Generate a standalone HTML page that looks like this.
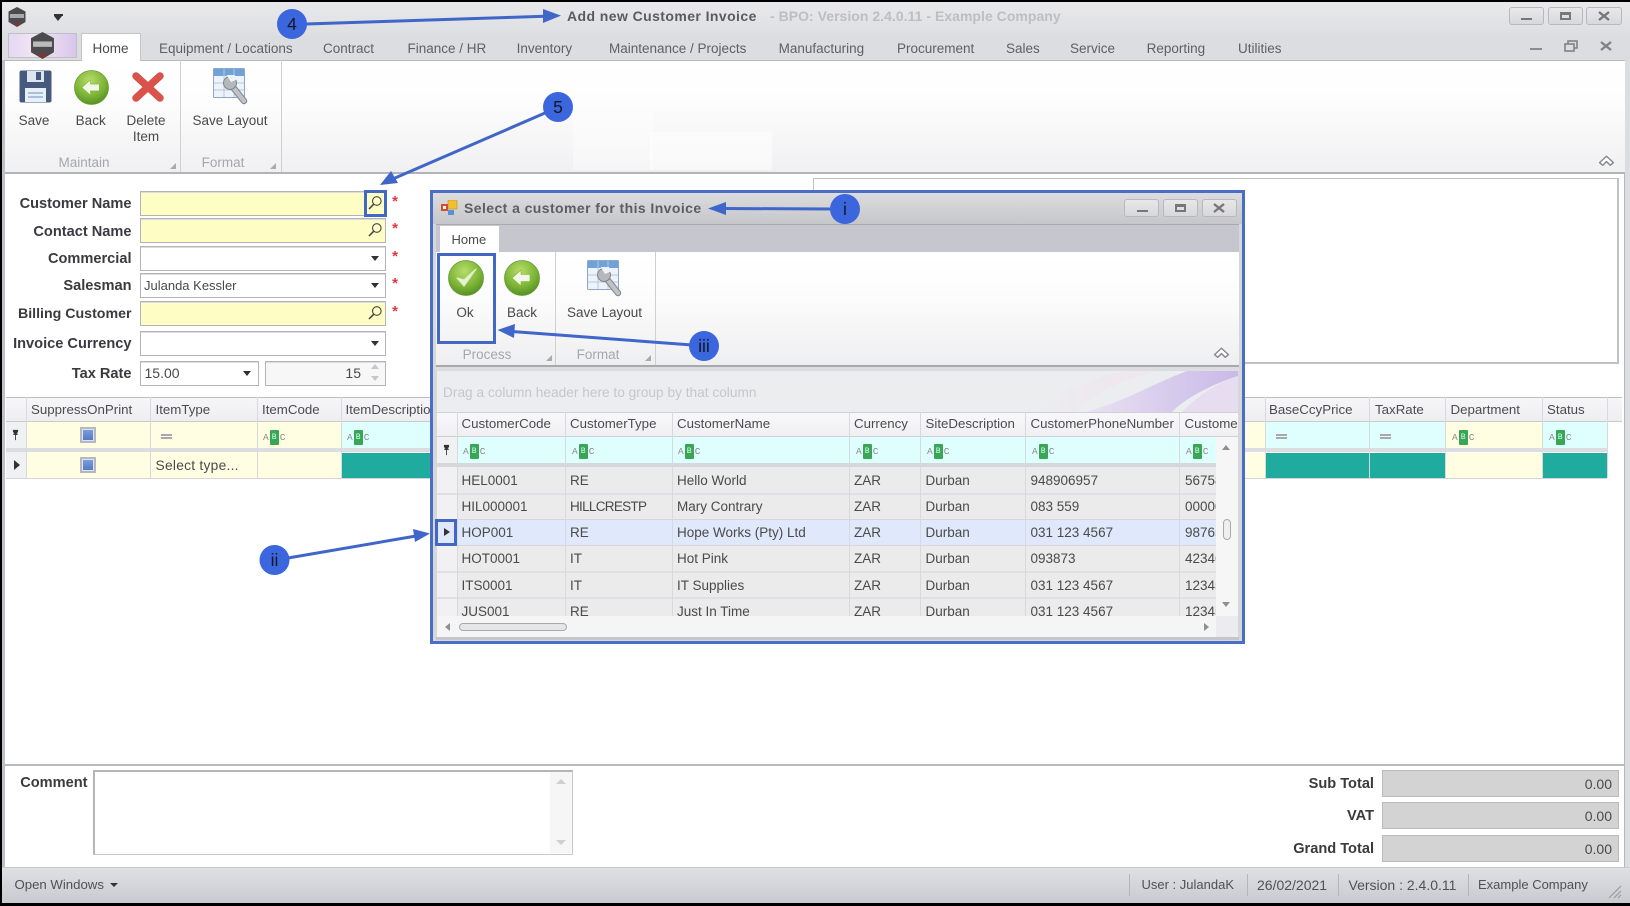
<!DOCTYPE html>
<html><head><meta charset="utf-8"><style>
html,body{margin:0;padding:0;background:#000;width:1630px;height:906px;overflow:hidden}
#p{position:relative;width:1630px;height:906px;overflow:hidden;background:#fff;font-family:"Liberation Sans",sans-serif;font-size:13.5px;color:#4a4a4a;filter:blur(.35px)}
#p div,#p span.a,#p svg{position:absolute}
.t{position:absolute;line-height:0;white-space:nowrap}
.c{transform:translateX(-50%)}
.r{transform:translateX(-100%)}
.b{font-weight:bold;font-size:14.6px;color:#3a3a3f}
.tab{color:#5f6066;font-size:13.5px}
.cap{color:#a6a7ab;font-size:13.5px}
.gh{color:#4c4c50;font-size:13.3px}
.abc{position:absolute;font:9.5px "Liberation Mono",monospace;color:#888;line-height:13px;height:13px;white-space:nowrap;margin-top:-5px}
.abc b{display:inline-block;width:9px;height:15px;line-height:15px;margin:-1px 1px;background:#3aa655;color:#cfe;font-weight:normal;text-align:center;border-radius:1px;font-size:8px;vertical-align:top}
.f{background:#ffffff;border:1px solid #b4b4b8;box-shadow:inset 0 1px 0 #ddd;box-sizing:border-box}
.y{background:#fdfdc4}
.v{width:1px;background:#d7d9de}
.h{height:1px;background:#d3d5d9}
.ast{color:#e0353b;font-weight:bold;font-size:15px}
.tri{width:0;height:0;border-left:5px solid transparent;border-right:5px solid transparent;border-top:5px solid #333}
.wb{box-sizing:border-box;border:1px solid #b8b9bd;border-radius:3px;background:linear-gradient(#e8e8ea,#d8d8db)}
.chk{width:16px;height:16px;box-sizing:border-box;border:2px solid #b5b8c4;background:linear-gradient(#7da0df,#5277c4);box-shadow:inset 0 0 0 1px #dfe3ee}
.hl{box-sizing:border-box;border:3px solid #4268c4}
.teal{background:#20ab9f}
</style></head><body><div id="p">

<svg width="0" height="0" style="position:absolute">
<defs>
<radialGradient id="gg" cx="45%" cy="30%" r="75%"><stop offset="0" stop-color="#b9dc6a"/><stop offset=".6" stop-color="#7cb536"/><stop offset="1" stop-color="#4f8a22"/></radialGradient>
<symbol id="back" viewBox="0 0 36 36"><circle cx="18" cy="18" r="17.5" fill="url(#gg)" stroke="#6a9a35" stroke-width=".8"/><path d="M8 18 L17 10 V14.5 H26 V21.5 H17 V26 Z" fill="#f2f8e6" stroke="#7cb536" stroke-width=".6"/></symbol>
<symbol id="ok" viewBox="0 0 36 36"><circle cx="18" cy="18" r="17.5" fill="url(#gg)" stroke="#6a9a35" stroke-width=".8"/><path d="M9 18 L16 26 L28 9 L16 20 Z" fill="#e9f2d8" stroke="#dfeec8" stroke-width="1.2" stroke-linejoin="round"/></symbol>
<symbol id="lay" viewBox="0 0 36 38"><rect x=".5" y=".5" width="31" height="29" rx="1" fill="#edf3fa" stroke="#8fa6c4"/><rect x="1" y="1" width="30" height="7" fill="#6ea2d8"/><path d="M1 15H31M1 22H31M11 1V29M21 1V29" stroke="#b7c8dc" fill="none"/><path d="M19 18 L31 33" stroke="#85898f" stroke-width="6.5" stroke-linecap="round"/><path d="M19 18 L31 33" stroke="#bfc2c7" stroke-width="4.3" stroke-linecap="round"/><circle cx="17" cy="15" r="6.5" fill="#b4b7bc" stroke="#7a7e84" stroke-width=".9"/><path d="M13.5 7 L18 14 L23 12 L22 7 Z" fill="#edf3fa"/></symbol>
<symbol id="srch" viewBox="0 0 16 16"><circle cx="9.8" cy="6" r="4.3" fill="none" stroke="#444" stroke-width="1.1"/><path d="M6.6 9.3 L2 14" stroke="#444" stroke-width="1.6"/></symbol>
<symbol id="pin" viewBox="0 0 10 14"><path d="M2 1H8V3.2L6.4 5.6H7.6V6.8H5.5V13H4.5V6.8H2.4V5.6H3.6L2 3.2Z" fill="#333"/></symbol>
<symbol id="chev" viewBox="0 0 16 12"><path d="M1.5 8 L8 2 L14.5 8 L11.5 10.5 L8 7 L4.5 10.5 Z" fill="#fff" stroke="#8a8b90" stroke-width="1.4" stroke-linejoin="round"/></symbol>
</defs></svg>

<!-- frame -->
<div style="left:0;top:0;width:1630px;height:2px;background:#000"></div>
<div style="left:0;top:0;width:2px;height:906px;background:#000"></div>
<div style="left:2px;top:2px;width:1628px;height:34px;background:linear-gradient(#e9e9eb,#dddee1)"></div>
<div style="left:2px;top:36px;width:1628px;height:24px;background:#dcdde0"></div>
<div style="left:2px;top:60px;width:3px;height:810px;background:#bfc0c5"></div>
<div style="left:1625px;top:60px;width:5px;height:810px;background:#dcdde0"></div>
<div style="left:1624px;top:60px;width:1px;height:810px;background:#b5b6ba"></div>

<!-- top-left -->
<svg style="left:8px;top:7px" width="18" height="20" viewBox="0 0 18 20"><path d="M9 0 L17.5 4.5 V15 L9 20 L.5 15 V4.5 Z" fill="#4c4a4c"/><rect x="2" y="7" width="14" height="4" fill="#aaa"/><path d="M6 16 L9 20 L12 16 Z" fill="#8c3030"/></svg>
<div style="left:54px;top:14px;width:9px;height:1.5px;background:#333"></div>
<div class="tri" style="left:54px;top:16px;border-width:5px 4.5px 0;border-top-color:#333"></div>

<!-- title -->
<span class="t" style="left:567px;top:16px;font-weight:bold;font-size:14px;color:#5a5b60;letter-spacing:.42px">Add new Customer Invoice</span>
<span class="t" style="left:770px;top:16px;font-weight:bold;font-size:14px;color:#bdbec2;letter-spacing:.03px">- BPO: Version 2.4.0.11 - Example Company</span>

<!-- window buttons -->
<div class="wb" style="left:1509px;top:7px;width:35px;height:18px"></div><div style="left:1521px;top:18px;width:11px;height:2px;background:#777"></div>
<div class="wb" style="left:1548px;top:7px;width:35px;height:18px"></div><div style="left:1560px;top:12px;width:11px;height:8px;box-sizing:border-box;border:2px solid #777;border-top-width:3px"></div>
<div class="wb" style="left:1586px;top:7px;width:36px;height:18px"></div><svg style="left:1598px;top:11px" width="12" height="10"><path d="M1 1L11 9M11 1L1 9" stroke="#777" stroke-width="2.4"/></svg>
<div style="left:1530px;top:48px;width:12px;height:2px;background:#8a8b90"></div>
<svg style="left:1564px;top:40px" width="14" height="12"><rect x="4" y="1" width="9" height="7" fill="none" stroke="#808186" stroke-width="1.6"/><rect x="1" y="4" width="9" height="7" fill="#dcdde0" stroke="#808186" stroke-width="1.6"/></svg>
<svg style="left:1600px;top:41px" width="12" height="10"><path d="M1 1L11 9M11 1L1 9" stroke="#808186" stroke-width="2.4"/></svg>

<!-- app button + tabs -->
<div style="left:8px;top:33px;width:69px;height:25px;border:1px solid #c0c0c6;box-sizing:border-box;background:linear-gradient(90deg,#e4d8f4,#f2e6f4 40%,#d8c6ec)"></div>
<svg style="left:30px;top:32px" width="25" height="27" viewBox="0 0 18 20"><path d="M9 0 L17.5 4.5 V15 L9 20 L.5 15 V4.5 Z" fill="#4c4a4c"/><rect x="2" y="7" width="14" height="4" fill="#bbb"/><path d="M6 16 L9 20 L12 16 Z" fill="#8c3030"/></svg>
<div style="left:81px;top:33px;width:60px;height:28px;box-sizing:border-box;background:#fff;border:1px solid #c4c5c9;border-bottom:0;z-index:2"></div>
<span class="t tab" style="left:92.5px;top:48.5px;color:#4a4a4f;z-index:3">Home</span>
<span class="t tab" style="left:159px;top:48.5px">Equipment / Locations</span>
<span class="t tab" style="left:323px;top:48.5px">Contract</span>
<span class="t tab" style="left:407.5px;top:48.5px">Finance / HR</span>
<span class="t tab" style="left:516.6px;top:48.5px">Inventory</span>
<span class="t tab" style="left:609px;top:48.5px">Maintenance / Projects</span>
<span class="t tab" style="left:778.6px;top:48.5px">Manufacturing</span>
<span class="t tab" style="left:897px;top:48.5px">Procurement</span>
<span class="t tab" style="left:1006px;top:48.5px">Sales</span>
<span class="t tab" style="left:1070px;top:48.5px">Service</span>
<span class="t tab" style="left:1146.6px;top:48.5px">Reporting</span>
<span class="t tab" style="left:1238px;top:48.5px">Utilities</span>

<!-- ribbon -->
<div style="left:5px;top:60px;width:1620px;height:113px;background:linear-gradient(#fff 0,#fdfdfd 35%,#f0f0f2 100%);border-top:1px solid #b9babe;box-sizing:border-box"></div>
<div style="left:573px;top:112px;width:80px;height:58px;background:#fff;opacity:.4"></div>
<div style="left:650px;top:132px;width:122px;height:38px;background:#fff;opacity:.5"></div>
<div style="left:5px;top:172px;width:1620px;height:2px;background:#b3b4b8"></div>
<div style="left:180px;top:60px;width:1px;height:112px;background:#cfd0d3"></div>
<div style="left:281px;top:60px;width:1px;height:112px;background:#cfd0d3"></div>

<svg style="left:19px;top:70px" width="33" height="33" viewBox="0 0 33 33"><rect x=".5" y=".5" width="32" height="32" rx="2" fill="#465a80"/><rect x="8" y="1" width="17" height="11" fill="#dfe5ee"/><rect x="17" y="2" width="5" height="8" fill="#465a80"/><rect x="6" y="18" width="21" height="14" fill="#e8eff8"/><path d="M9 23H24M9 27H24" stroke="#8fb0d8" stroke-width="1.5"/></svg>
<svg style="left:74px;top:70px" width="35" height="35"><use href="#back"/></svg>
<svg style="left:132px;top:72px" width="32" height="30" viewBox="0 0 32 30"><path d="M4 4 L28 26 M28 4 L4 26" stroke="#d9534a" stroke-width="7.5" stroke-linecap="round"/></svg>
<svg style="left:213px;top:68px" width="36" height="38"><use href="#lay"/></svg>
<span class="t c" style="left:34px;top:121px">Save</span>
<span class="t c" style="left:90.7px;top:121px">Back</span>
<span class="t c" style="left:146px;top:121px">Delete</span>
<span class="t c" style="left:146px;top:137px">Item</span>
<span class="t c" style="left:230px;top:121px">Save Layout</span>
<span class="t c cap" style="left:84px;top:163px">Maintain</span>
<span class="t c cap" style="left:223px;top:163px">Format</span>
<div style="left:170px;top:163px;border-left:6px solid transparent;border-bottom:6px solid #aaa"></div>
<div style="left:270px;top:163px;border-left:6px solid transparent;border-bottom:6px solid #aaa"></div>
<svg style="left:1598px;top:154px" width="17" height="13"><use href="#chev"/></svg>

<!-- background panel -->
<div style="left:813px;top:178px;width:806px;height:186px;box-sizing:border-box;border:1px solid #c0c1c5;border-right-width:2px;border-bottom-width:2px"></div>

<!-- form -->
<span class="t r b" style="left:131.5px;top:204px">Customer Name</span>
<span class="t r b" style="left:131.5px;top:231.5px">Contact Name</span>
<span class="t r b" style="left:131.5px;top:259px">Commercial</span>
<span class="t r b" style="left:131.5px;top:286px">Salesman</span>
<span class="t r b" style="left:131.5px;top:314px;font-size:14.2px">Billing Customer</span>
<span class="t r b" style="left:131.5px;top:344px">Invoice Currency</span>
<span class="t r b" style="left:131.5px;top:374px">Tax Rate</span>

<div class="f y" style="left:139.5px;top:191px;width:246px;height:24.5px"></div>
<div class="f y" style="left:139.5px;top:218px;width:246px;height:25px"></div>
<div class="f" style="left:139.5px;top:246px;width:246px;height:24.5px"></div>
<div class="f" style="left:139.5px;top:273px;width:246px;height:25px"></div>
<div class="f y" style="left:139.5px;top:301px;width:246px;height:24.5px"></div>
<div class="f" style="left:139.5px;top:330.5px;width:246px;height:25px"></div>
<div class="f" style="left:139.5px;top:360.5px;width:119px;height:25px"></div>
<div class="f" style="left:264.5px;top:360.5px;width:121px;height:25px;background:#f7f7f8"></div>
<span class="t" style="left:144px;top:285.5px;font-size:13px">Julanda Kessler</span>
<span class="t" style="left:144.5px;top:373px;font-size:14px">15.00</span>
<span class="t r" style="left:361px;top:373px;font-size:14px">15</span>
<div style="left:371px;top:364px;border:4px solid transparent;border-top:0;border-bottom:5px solid #c6c7ca"></div>
<div style="left:371px;top:376px;border:4px solid transparent;border-bottom:0;border-top:5px solid #c6c7ca"></div>
<svg style="left:367px;top:195px" width="16" height="16"><use href="#srch"/></svg>
<svg style="left:367px;top:222px" width="16" height="16"><use href="#srch"/></svg>
<svg style="left:367px;top:305px" width="16" height="16"><use href="#srch"/></svg>
<div class="hl" style="left:364px;top:190px;width:23px;height:26.5px"></div>
<div class="tri" style="left:371px;top:256px;border-width:5px 4.5px 0"></div>
<div class="tri" style="left:371px;top:283px;border-width:5px 4.5px 0"></div>
<div class="tri" style="left:371px;top:341px;border-width:5px 4.5px 0"></div>
<div class="tri" style="left:243px;top:371px;border-width:5px 4.5px 0"></div>
<span class="t c ast" style="left:395px;top:202px">*</span>
<span class="t c ast" style="left:395px;top:229px">*</span>
<span class="t c ast" style="left:395px;top:257px">*</span>
<span class="t c ast" style="left:395px;top:284px">*</span>
<span class="t c ast" style="left:395px;top:312px">*</span>

<!-- main grid -->
<div style="left:6px;top:397px;width:1616px;height:25px;background:linear-gradient(#f6f6f8,#eeeef0);border-top:1px solid #bcbdc1;border-bottom:1px solid #c9cacd;box-sizing:border-box"></div>
<div style="left:26px;top:422px;width:315px;height:26px;background:#fffde2"></div>
<div style="left:341px;top:422px;width:924px;height:26px;background:#dfffff"></div>
<div style="left:6px;top:422px;width:20px;height:26px;background:#f0f1f3"></div>
<div style="left:1265px;top:422px;width:180px;height:26px;background:#dfffff"></div>
<div style="left:1445px;top:422px;width:97px;height:26px;background:#fffde2"></div>
<div style="left:1542px;top:422px;width:65px;height:26px;background:#dfffff"></div>
<div style="left:1245px;top:422px;width:20px;height:26px;background:#fffde2"></div>
<div style="left:6px;top:448px;width:1601px;height:4px;background:#dcdde0"></div>
<div style="left:26px;top:452px;width:315px;height:26px;background:#fffde2"></div>
<div style="left:6px;top:452px;width:20px;height:26px;background:#f0f1f3"></div>
<div class="teal" style="left:341px;top:453px;width:90px;height:25px"></div>
<div style="left:1245px;top:453px;width:20px;height:25px;background:#fffde2"></div>
<div class="teal" style="left:1265px;top:453px;width:104px;height:25px"></div>
<div class="teal" style="left:1370px;top:453px;width:75px;height:25px"></div>
<div style="left:1446px;top:453px;width:96px;height:25px;background:#fffde2"></div>
<div class="teal" style="left:1543px;top:453px;width:64px;height:25px"></div>
<div class="h" style="left:6px;top:478px;width:1601px"></div>
<div class="v" style="left:26px;top:397px;height:81px"></div>
<div class="v" style="left:150px;top:397px;height:81px"></div>
<div class="v" style="left:257px;top:397px;height:81px"></div>
<div class="v" style="left:341px;top:397px;height:81px"></div>
<div class="v" style="left:1265px;top:397px;height:81px"></div>
<div class="v" style="left:1369px;top:397px;height:81px"></div>
<div class="v" style="left:1445px;top:397px;height:81px"></div>
<div class="v" style="left:1542px;top:397px;height:81px"></div>
<div class="v" style="left:1607px;top:397px;height:81px"></div>
<span class="t gh" style="left:31px;top:409.5px">SuppressOnPrint</span>
<span class="t gh" style="left:155.5px;top:409.5px">ItemType</span>
<span class="t gh" style="left:262px;top:409.5px">ItemCode</span>
<span class="t gh" style="left:345.5px;top:409.5px">ItemDescription</span>
<span class="t gh" style="left:1269px;top:409.5px">BaseCcyPrice</span>
<span class="t gh" style="left:1375px;top:409.5px">TaxRate</span>
<span class="t gh" style="left:1450.5px;top:409.5px">Department</span>
<span class="t gh" style="left:1547px;top:409.5px">Status</span>
<svg style="left:11px;top:429px" width="9" height="12"><use href="#pin"/></svg>
<div class="chk" style="left:80px;top:427px"></div>
<div class="chk" style="left:80px;top:457px"></div>
<div style="left:161px;top:434px;width:11px;height:1.5px;background:#a9a9ad;box-shadow:0 3px 0 #a9a9ad"></div>
<div style="left:1276px;top:434px;width:11px;height:1.5px;background:#a9a9ad;box-shadow:0 3px 0 #a9a9ad"></div>
<div style="left:1380px;top:434px;width:11px;height:1.5px;background:#a9a9ad;box-shadow:0 3px 0 #a9a9ad"></div>
<span class="abc" style="left:263px;top:436px">A<b>B</b>C</span>
<span class="abc" style="left:347px;top:436px">A<b>B</b>C</span>
<span class="abc" style="left:1452px;top:436px">A<b>B</b>C</span>
<span class="abc" style="left:1549px;top:436px">A<b>B</b>C</span>
<div style="left:14px;top:460px;border:5px solid transparent;border-left:6px solid #333;border-right:0"></div>
<span class="t" style="left:155.5px;top:465.5px;font-size:13.8px;letter-spacing:.25px">Select type...</span>

<div style="left:5px;top:764px;width:1620px;height:2px;background:#b9babd"></div>

<!-- bottom -->
<span class="t r b" style="left:87.5px;top:783px">Comment</span>
<div style="left:93px;top:770px;width:480px;height:84.5px;box-sizing:border-box;border:1px solid #c9c9cc;border-top:2px solid #b5b5b8;border-left:2px solid #b5b5b8"></div>
<div style="left:550px;top:772px;width:22px;height:81px;background:#f6f6f7"></div>
<div style="left:556px;top:779px;border:5px solid transparent;border-top:0;border-bottom:5px solid #d0d0d3"></div>
<div style="left:556px;top:840px;border:5px solid transparent;border-bottom:0;border-top:5px solid #d0d0d3"></div>

<span class="t r b" style="left:1374px;top:784px">Sub Total</span>
<span class="t r b" style="left:1374px;top:816px">VAT</span>
<span class="t r b" style="left:1374px;top:849px">Grand Total</span>
<div style="left:1381.5px;top:770px;width:237px;height:27px;background:#d3d3d3;border:1px solid #bbb;box-sizing:border-box"></div>
<div style="left:1381.5px;top:802px;width:237px;height:27px;background:#d3d3d3;border:1px solid #bbb;box-sizing:border-box"></div>
<div style="left:1381.5px;top:835px;width:237px;height:27px;background:#d3d3d3;border:1px solid #bbb;box-sizing:border-box"></div>
<span class="t r" style="left:1612px;top:783.5px;font-size:14px">0.00</span>
<span class="t r" style="left:1612px;top:815.5px;font-size:14px">0.00</span>
<span class="t r" style="left:1612px;top:848.5px;font-size:14px">0.00</span>

<!-- status bar -->
<div style="left:2px;top:867px;width:1628px;height:36px;background:linear-gradient(#dfe0e4,#c9cad0);border-top:1px solid #c8c9cc;box-sizing:border-box"></div>
<div style="left:0;top:903px;width:1630px;height:3px;background:#000"></div>
<span class="t" style="left:14.5px;top:885px;font-size:13.2px;color:#505055">Open Windows</span>
<div class="tri" style="left:109.5px;top:883px;border-width:4px 4px 0"></div>
<div class="v" style="left:1129px;top:874px;height:22px;background:#b5b6bb"></div>
<div class="v" style="left:1247px;top:874px;height:22px;background:#b5b6bb"></div>
<div class="v" style="left:1338px;top:874px;height:22px;background:#b5b6bb"></div>
<div class="v" style="left:1468px;top:874px;height:22px;background:#b5b6bb"></div>
<span class="t" style="left:1141.5px;top:885px;font-size:13px;color:#505055">User : JulandaK</span>
<span class="t" style="left:1257px;top:885px;font-size:14px;color:#505055">26/02/2021</span>
<span class="t" style="left:1348.5px;top:885px;font-size:14px;color:#505055">Version : 2.4.0.11</span>
<span class="t" style="left:1478px;top:885px;font-size:13px;color:#505055">Example Company</span>
<svg style="left:1608px;top:885px" width="14" height="14"><path d="M1 13L13 1M6 13L13 6M10 13L13 10" stroke="#9a9ba0" stroke-width="1.2"/></svg>

<!-- DIALOG -->
<div style="left:430px;top:190px;width:815px;height:454px;box-sizing:border-box;border:3px solid #4a6ec6;background:#d6d7db"></div>
<div style="left:433px;top:193px;width:809px;height:31px;background:linear-gradient(#dcdcde,#c6c7ca)"></div>
<div style="left:436px;top:224px;width:803px;height:29px;background:#c6c7ce;border-top:1px solid #a9aaae;box-sizing:border-box"></div>
<svg style="left:441px;top:200px" width="17" height="16"><rect x="7" y="0" width="9" height="9" fill="#f0c030" stroke="#b08a20" stroke-width=".5"/><rect x="0" y="4" width="7" height="7" fill="#d94a30"/><rect x="7" y="10" width="6" height="5" fill="#5a8fdc"/><rect x="2" y="6" width="3" height="3" fill="#fff"/></svg>
<span class="t" style="left:464px;top:208px;font-weight:bold;font-size:14px;color:#5c5d62;letter-spacing:.42px">Select a customer for this Invoice</span>
<div class="wb" style="left:1124px;top:199px;width:35px;height:18px"></div><div style="left:1137px;top:210px;width:11px;height:2px;background:#777"></div>
<div class="wb" style="left:1163px;top:199px;width:35px;height:18px"></div><div style="left:1175px;top:204px;width:11px;height:8px;box-sizing:border-box;border:2px solid #777;border-top-width:3px"></div>
<div class="wb" style="left:1202px;top:199px;width:35px;height:18px"></div><svg style="left:1213px;top:203px" width="12" height="10"><path d="M1 1L11 9M11 1L1 9" stroke="#777" stroke-width="2.4"/></svg>
<div style="left:440px;top:226px;width:59px;height:27px;background:#fff"></div>
<span class="t" style="left:451.5px;top:240px;font-size:13px;color:#4a4a4f">Home</span>

<div style="left:436px;top:252px;width:803px;height:113px;background:linear-gradient(#fff 0,#fdfdfd 35%,#efeff1 100%)"></div>
<div style="left:436px;top:365px;width:803px;height:2px;background:#a8a9ad"></div>
<div style="left:555px;top:252px;width:1px;height:113px;background:#cfd0d3"></div>
<div style="left:655px;top:252px;width:1px;height:113px;background:#cfd0d3"></div>
<svg style="left:448px;top:260px" width="36" height="36"><use href="#ok"/></svg>
<svg style="left:504px;top:260px" width="36" height="36"><use href="#back"/></svg>
<svg style="left:587px;top:260px" width="36" height="38"><use href="#lay"/></svg>
<span class="t c" style="left:465px;top:312.5px">Ok</span>
<span class="t c" style="left:522px;top:312.5px">Back</span>
<span class="t c" style="left:604.5px;top:312.5px">Save Layout</span>
<span class="t c cap" style="left:487px;top:355px">Process</span>
<span class="t c cap" style="left:598px;top:355px">Format</span>
<div style="left:546px;top:355px;border-left:6px solid transparent;border-bottom:6px solid #aaa"></div>
<div style="left:645px;top:355px;border-left:6px solid transparent;border-bottom:6px solid #aaa"></div>
<svg style="left:1213px;top:346px" width="17" height="13"><use href="#chev"/></svg>

<div style="left:436px;top:367px;width:803px;height:4px;background:#dcdde0"></div>
<!-- group panel -->
<div style="left:437px;top:371px;width:801px;height:41px;background:#ecedef;overflow:hidden">
<svg style="left:0;top:0" width="801" height="41" viewBox="0 0 801 41">
<defs><linearGradient id="sw" x1="0" x2="1"><stop offset="0" stop-color="#e9e2f2"/><stop offset="1" stop-color="#c9b9e8"/></linearGradient><linearGradient id="sp" x1="0" x2="1"><stop offset="0" stop-color="#ecedef"/><stop offset="1" stop-color="#f0e4ee"/></linearGradient></defs>
<path d="M600 41 C620 20 660 5 690 0 H720 C680 10 650 25 640 41 Z" fill="url(#sp)"/>
<path d="M648 41 C690 30 710 15 750 0 H801 V5 C770 15 745 30 735 41 Z" fill="url(#sw)"/>
<path d="M745 41 C760 25 780 12 801 5 V41 Z" fill="#e6def0"/>
</svg></div>
<span class="t" style="left:443px;top:392.5px;font-size:13.7px;color:#c6c7cb">Drag a column header here to group by that column</span>

<!-- dialog grid -->
<div style="left:437px;top:412px;width:801px;height:25px;background:linear-gradient(#f8f8fa,#f0f0f3);border-top:1px solid #cfd0d4;border-bottom:1px solid #cfd0d4;box-sizing:border-box"></div>
<div style="left:437px;top:437px;width:20px;height:26px;background:#f0f1f3"></div>
<div style="left:457px;top:437px;width:759px;height:26px;background:#dfffff"></div>
<div style="left:437px;top:463px;width:779px;height:4px;background:#d6d7da"></div>
<div style="left:437px;top:467px;width:20px;height:149px;background:#f1f1f3"></div>
<div style="left:457px;top:467px;width:759px;height:149px;background:#ebebeb"></div>
<div style="left:437px;top:519px;width:779px;height:26px;background:#e0e9fb"></div>
<div class="h" style="left:437px;top:493px;width:779px;height:2px;background:#dfe0e3"></div>
<div class="h" style="left:437px;top:519px;width:779px;background:#d5d7dc"></div>
<div class="h" style="left:437px;top:545px;width:779px;background:#d5d7dc"></div>
<div class="h" style="left:437px;top:571px;width:779px;height:2px;background:#dfe0e3"></div>
<div class="h" style="left:437px;top:597px;width:779px;height:2px;background:#dfe0e3"></div>
<div class="v" style="left:457px;top:412px;height:204px"></div>
<div class="v" style="left:565px;top:412px;height:204px"></div>
<div class="v" style="left:672px;top:412px;height:204px"></div>
<div class="v" style="left:849px;top:412px;height:204px"></div>
<div class="v" style="left:920px;top:412px;height:204px"></div>
<div class="v" style="left:1025px;top:412px;height:204px"></div>
<div class="v" style="left:1179px;top:412px;height:204px"></div>

<span class="t gh" style="left:461.5px;top:424px">CustomerCode</span>
<span class="t gh" style="left:570px;top:424px">CustomerType</span>
<span class="t gh" style="left:677px;top:424px">CustomerName</span>
<span class="t gh" style="left:854px;top:424px">Currency</span>
<span class="t gh" style="left:925.5px;top:424px">SiteDescription</span>
<span class="t gh" style="left:1030.5px;top:424px">CustomerPhoneNumber</span>
<span class="t gh" style="left:1184.5px;top:424px">Custome</span>
<svg style="left:442px;top:444px" width="9" height="12"><use href="#pin"/></svg>
<span class="abc" style="left:463px;top:450px">A<b>B</b>C</span>
<span class="abc" style="left:572px;top:450px">A<b>B</b>C</span>
<span class="abc" style="left:678px;top:450px">A<b>B</b>C</span>
<span class="abc" style="left:856px;top:450px">A<b>B</b>C</span>
<span class="abc" style="left:927px;top:450px">A<b>B</b>C</span>
<span class="abc" style="left:1032px;top:450px">A<b>B</b>C</span>
<span class="abc" style="left:1186px;top:450px">A<b>B</b>C</span>

<span class="t" style="left:461.5px;top:480.5px">HEL0001</span><span class="t" style="left:570px;top:480.5px">RE</span><span class="t" style="left:677px;top:480.5px">Hello World</span><span class="t" style="left:854px;top:480.5px">ZAR</span><span class="t" style="left:925.5px;top:480.5px">Durban</span><span class="t" style="left:1030.5px;top:480.5px">948906957</span><span class="t" style="left:1185px;top:480.5px">56758</span>
<span class="t" style="left:461.5px;top:506.5px">HIL000001</span><span class="t" style="left:570px;top:506.5px;letter-spacing:-.7px">HILLCRESTP</span><span class="t" style="left:677px;top:506.5px">Mary Contrary</span><span class="t" style="left:854px;top:506.5px">ZAR</span><span class="t" style="left:925.5px;top:506.5px">Durban</span><span class="t" style="left:1030.5px;top:506.5px">083 559</span><span class="t" style="left:1185px;top:506.5px">00000</span>
<span class="t" style="left:461.5px;top:533px">HOP001</span><span class="t" style="left:570px;top:533px">RE</span><span class="t" style="left:677px;top:533px">Hope Works (Pty) Ltd</span><span class="t" style="left:854px;top:533px">ZAR</span><span class="t" style="left:925.5px;top:533px">Durban</span><span class="t" style="left:1030.5px;top:533px">031 123 4567</span><span class="t" style="left:1185px;top:533px">98765</span>
<span class="t" style="left:461.5px;top:559px">HOT0001</span><span class="t" style="left:570px;top:559px">IT</span><span class="t" style="left:677px;top:559px">Hot Pink</span><span class="t" style="left:854px;top:559px">ZAR</span><span class="t" style="left:925.5px;top:559px">Durban</span><span class="t" style="left:1030.5px;top:559px">093873</span><span class="t" style="left:1185px;top:559px">42346</span>
<span class="t" style="left:461.5px;top:585.5px">ITS0001</span><span class="t" style="left:570px;top:585.5px">IT</span><span class="t" style="left:677px;top:585.5px">IT Supplies</span><span class="t" style="left:854px;top:585.5px">ZAR</span><span class="t" style="left:925.5px;top:585.5px">Durban</span><span class="t" style="left:1030.5px;top:585.5px">031 123 4567</span><span class="t" style="left:1185px;top:585.5px">12345</span>
<span class="t" style="left:461.5px;top:611.5px">JUS001</span><span class="t" style="left:570px;top:611.5px">RE</span><span class="t" style="left:677px;top:611.5px">Just In Time</span><span class="t" style="left:854px;top:611.5px">ZAR</span><span class="t" style="left:925.5px;top:611.5px">Durban</span><span class="t" style="left:1030.5px;top:611.5px">031 123 4567</span><span class="t" style="left:1185px;top:611.5px">12345</span>

<div style="left:444px;top:528px;border:4.5px solid transparent;border-left:6px solid #333;border-right:0"></div>

<!-- scrollbars -->
<div style="left:1216px;top:437px;width:22px;height:179px;background:#f6f6f7"></div>
<div style="left:1222px;top:445px;border:4px solid transparent;border-top:0;border-bottom:5px solid #8e8f93"></div>
<div style="left:1222px;top:602px;border:4px solid transparent;border-bottom:0;border-top:5px solid #8e8f93"></div>
<div style="left:1223px;top:519px;width:8px;height:21px;box-sizing:border-box;border:1px solid #a9aaae;border-radius:4px;background:#eee"></div>
<div style="left:437px;top:616px;width:779px;height:21px;background:#f5f5f6"></div>
<div style="left:1216px;top:616px;width:22px;height:21px;background:#ececee"></div>
<div style="left:445px;top:623px;border:4px solid transparent;border-right:5px solid #8e8f93;border-left:0"></div>
<div style="left:1204px;top:623px;border:4px solid transparent;border-left:5px solid #8e8f93;border-right:0"></div>
<div style="left:459px;top:623px;width:108px;height:8px;box-sizing:border-box;border:1px solid #a9aaae;border-radius:4px;background:#e6e6e8"></div>
<div style="left:436px;top:637px;width:803px;height:3px;background:#c5c6ca"></div>

<!-- highlights -->
<div class="hl" style="left:437px;top:253px;width:58.5px;height:91px"></div>
<div class="hl" style="left:435px;top:519px;width:22px;height:26.5px"></div>

<!-- annotations -->
<svg style="left:0;top:0" width="1630" height="906" viewBox="0 0 1630 906">
<g stroke="#3f66c8" stroke-width="3" fill="none">
<path d="M306 24 L545 16.3"/><path d="M832 209 L722 208.5"/><path d="M692 345 L512 331.5"/><path d="M288 558 L416 536"/><path d="M545 113 L395 178"/>
</g>
<g fill="#3f66c8">
<path d="M561 15.6 L543 9 L543 23 Z"/><path d="M708 208.5 L726 202 L726 215 Z"/><path d="M497.5 330 L515 324 L514 338 Z"/><path d="M430 533.5 L413 529 L415 542 Z"/><path d="M380 185 L391 171 L398 183 Z"/>
</g>
<g fill="#3b66dd">
<circle cx="292" cy="24" r="15"/><circle cx="558" cy="107" r="15"/><circle cx="845" cy="209" r="15"/><circle cx="704" cy="346" r="15"/><circle cx="274.5" cy="560" r="15"/>
</g>
<g font-family="Liberation Sans,sans-serif" font-size="17.5" fill="#101828" text-anchor="middle">
<text x="292" y="30">4</text><text x="558" y="113">5</text><text x="845" y="215">i</text><text x="704" y="352">iii</text><text x="274.5" y="566">ii</text>
</g>
</svg>

</div></body></html>
